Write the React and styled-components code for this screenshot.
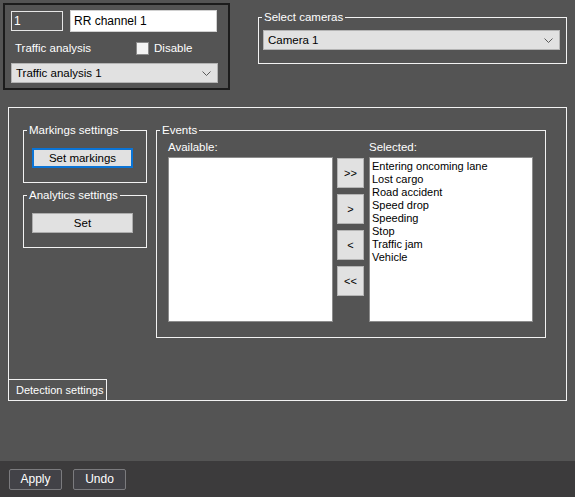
import React from 'react';
import styled, { createGlobalStyle } from 'styled-components';

const GlobalStyle = createGlobalStyle`
  html, body {
    margin: 0;
    padding: 0;
    background: #545454;
  }
  body {
    font-family: "Liberation Sans", Arial, sans-serif;
    font-size: 11px;
    color: #fff;
  }
`;

const Page = styled.div`
  width: 575px;
  height: 497px;
  display: flex;
  flex-direction: column;
  overflow: hidden;
`;

const TopRow = styled.div`
  display: flex;
  align-items: flex-start;
  padding: 3px 0 0 3px;
`;

const ChannelBox = styled.div`
  width: 227px;
  height: 87px;
  box-sizing: border-box;
  border: 2px solid #1c1c1c;
  padding: 5px 0 0 6px;
  display: flex;
  flex-direction: column;
`;

const Row = styled.div`
  display: flex;
  align-items: center;
`;

const NumberInput = styled.input`
  width: 52px;
  height: 20px;
  box-sizing: border-box;
  border: 1px solid #e6e6e6;
  background: transparent;
  color: #fff;
  font: 12px "Liberation Sans", Arial, sans-serif;
  padding: 0 2px;
  outline: none;
`;

const NameInput = styled.input`
  width: 147px;
  height: 22px;
  margin-left: 7px;
  box-sizing: border-box;
  border: 1px solid #d0d0d0;
  background: #fff;
  color: #000;
  font: 12px "Liberation Sans", Arial, sans-serif;
  padding: 0 3px;
  outline: none;
`;

const Caption = styled.span`
  font-size: 11.5px;
  color: #fff;
`;

const CheckRow = styled(Row)`
  height: 24px;
  margin-top: 4px;
  padding-left: 4px;
`;

const Check = styled.span`
  width: 13px;
  height: 13px;
  box-sizing: border-box;
  border: 1px solid #8a8a8a;
  background: #f4f4f4;
  margin-left: 45px;
  margin-right: 5px;
`;

const Combo = styled.div`
  width: ${(p) => p.width}px;
  height: 20px;
  box-sizing: border-box;
  margin-top: ${(p) => p.top || 0}px;
  margin-left: ${(p) => p.left || 0}px;
  background: #e1e1e1;
  border: 1px solid #b4b4b4;
  color: #000;
  font-size: 11.5px;
  display: flex;
  align-items: center;
  justify-content: space-between;
  padding: 0 6px 0 4px;
`;

const Chevron = () => (
  <svg width="9" height="5" viewBox="0 0 9 5">
    <path d="M0.5 0.5 L4.5 4.5 L8.5 0.5" fill="none" stroke="#5a5a5a" strokeWidth="1" />
  </svg>
);

const Group = styled.fieldset`
  margin: 0;
  padding: 0;
  box-sizing: border-box;
  border: 1px solid #f2f2f2;
  min-width: 0;
  width: ${(p) => p.width}px;
  height: ${(p) => p.height}px;
`;

const Legend = styled.legend`
  margin-left: 3px;
  padding: 0 2px;
  font-size: 11.5px;
  line-height: 14px;
  color: #fff;
`;

const CameraGroup = styled(Group)`
  margin: 7px 0 0 28px;
`;

const MainPanel = styled.div`
  margin: 17px 0 0 8px;
  width: 559px;
  height: 294px;
  box-sizing: border-box;
  border: 1px solid #f2f2f2;
  display: flex;
  flex-direction: column;
`;

const PanelBody = styled.div`
  display: flex;
  align-items: flex-start;
  padding: 15px 0 0 14px;
`;

const LeftColumn = styled.div`
  display: flex;
  flex-direction: column;
  gap: 5px;
`;

const PushButton = styled.button`
  width: 101px;
  height: 20px;
  margin: 11px 0 0 8px;
  box-sizing: border-box;
  background: #e1e1e1;
  border: ${(p) => (p.focused ? '2px solid #0a74d6' : '1px solid #adadad')};
  color: #000;
  font: 11.5px "Liberation Sans", Arial, sans-serif;
  padding: 0;
`;

const EventsGroup = styled(Group)`
  margin-left: 9px;
`;

const EventsBody = styled.div`
  display: flex;
  padding: 3px 0 0 11px;
`;

const ListColumn = styled.div`
  display: flex;
  flex-direction: column;
  width: ${(p) => p.width}px;
`;

const ListLabel = styled.div`
  height: 14px;
  line-height: 14px;
  margin-bottom: 3px;
  font-size: 11.5px;
`;

const ListBox = styled.div`
  height: 165px;
  box-sizing: border-box;
  background: #fff;
  border: 1px solid #8c8c8c;
  padding: 2px 2px;
  color: #000;
  font-size: 11px;
  line-height: 13px;
`;

const MoveColumn = styled.div`
  display: flex;
  flex-direction: column;
  gap: 6px;
  margin: 18px 5px 0 4px;
`;

const MoveButton = styled.button`
  width: 27px;
  height: 30px;
  box-sizing: border-box;
  background: #e1e1e1;
  border: 1px solid #b4b4b4;
  color: #000;
  font: 11px "Liberation Sans", Arial, sans-serif;
  padding: 0;
`;

const Tab = styled.div`
  margin-top: auto;
  width: 98px;
  height: 21px;
  box-sizing: border-box;
  border-top: 1px solid #f2f2f2;
  border-right: 1px solid #f2f2f2;
  padding-left: 7px;
  display: flex;
  align-items: center;
  white-space: nowrap;
  font-size: 11px;
`;

const BottomBar = styled.div`
  margin-top: auto;
  height: 36px;
  background: #3c3b3c;
  display: flex;
  align-items: center;
  gap: 11px;
  padding-left: 9px;
`;

const BarButton = styled.button`
  width: 53px;
  height: 21px;
  box-sizing: border-box;
  background: #424247;
  border: 1px solid #7b7b7e;
  border-radius: 2px;
  color: #fff;
  font: 12px "Liberation Sans", Arial, sans-serif;
  padding: 0;
`;

const selected = [
  'Entering oncoming lane',
  'Lost cargo',
  'Road accident',
  'Speed drop',
  'Speeding',
  'Stop',
  'Traffic jam',
  'Vehicle',
];

export default function App() {
  return (
    <Page>
      <GlobalStyle />
      <TopRow>
        <ChannelBox>
          <Row>
            <NumberInput readOnly value="1" />
            <NameInput readOnly value="RR channel 1" />
          </Row>
          <CheckRow>
            <Caption>Traffic analysis</Caption>
            <Check />
            <Caption>Disable</Caption>
          </CheckRow>
          <Combo width={207} top={3}>
            <span>Traffic analysis 1</span>
            <Chevron />
          </Combo>
        </ChannelBox>
        <CameraGroup width={309} height={54}>
          <Legend>Select cameras</Legend>
          <Combo width={297} top={6} left={4}>
            <span>Camera 1</span>
            <Chevron />
          </Combo>
        </CameraGroup>
      </TopRow>

      <MainPanel>
        <PanelBody>
          <LeftColumn>
            <Group width={124} height={60}>
              <Legend>Markings settings</Legend>
              <PushButton focused>Set markings</PushButton>
            </Group>
            <Group width={124} height={60}>
              <Legend>Analytics settings</Legend>
              <PushButton>Set</PushButton>
            </Group>
          </LeftColumn>
          <EventsGroup width={390} height={215}>
            <Legend>Events</Legend>
            <EventsBody>
              <ListColumn width={165}>
                <ListLabel>Available:</ListLabel>
                <ListBox />
              </ListColumn>
              <MoveColumn>
                <MoveButton>&gt;&gt;</MoveButton>
                <MoveButton>&gt;</MoveButton>
                <MoveButton>&lt;</MoveButton>
                <MoveButton>&lt;&lt;</MoveButton>
              </MoveColumn>
              <ListColumn width={164}>
                <ListLabel>Selected:</ListLabel>
                <ListBox>
                  {selected.map((s) => (
                    <div key={s}>{s}</div>
                  ))}
                </ListBox>
              </ListColumn>
            </EventsBody>
          </EventsGroup>
        </PanelBody>
        <Tab>Detection settings</Tab>
      </MainPanel>

      <BottomBar>
        <BarButton>Apply</BarButton>
        <BarButton>Undo</BarButton>
      </BottomBar>
    </Page>
  );
}
